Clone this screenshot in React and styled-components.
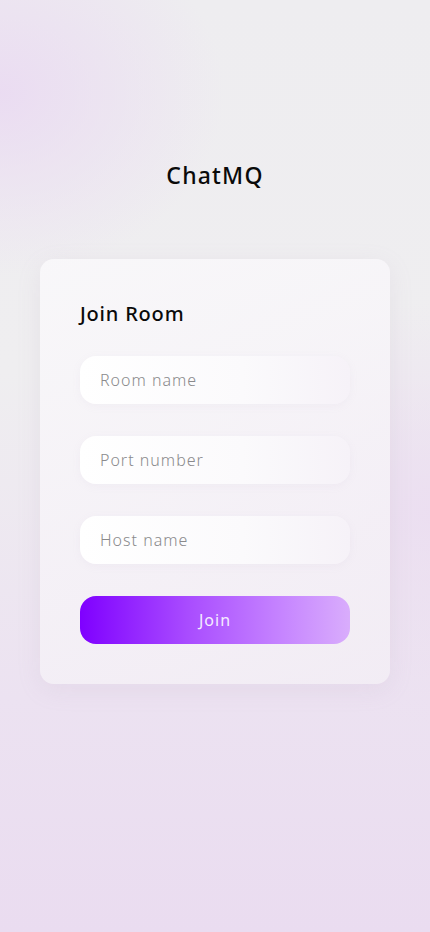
import React from 'react'
import styled, { createGlobalStyle } from 'styled-components'

const GlobalStyle = createGlobalStyle`
  html, body {
    margin: 0;
    padding: 0;
  }
  body {
    font-family: 'Noto Sans', 'Open Sans', sans-serif;
    background: #efedf1;
  }
  * {
    box-sizing: border-box;
  }
`

const fields = ['Room name', 'Port number', 'Host name']

export default () => (
  <>
    <GlobalStyle />
    <Page>
      <Logo>ChatMQ</Logo>
      <Card>
        <Heading>Join Room</Heading>
        <Form onSubmit={e => e.preventDefault()}>
          {fields.map(name => (
            <Input key={name} placeholder={name} />
          ))}
          <Button type="submit">Join</Button>
        </Form>
      </Card>
    </Page>
  </>
)

const Page = styled.div`
  width: 430px;
  height: 932px;
  overflow: hidden;
  display: flex;
  flex-direction: column;
  align-items: center;
  padding-top: 158px;
  background:
    radial-gradient(ellipse 320px 260px at 0% 10%, rgba(234, 218, 242, 0.9), rgba(234, 218, 242, 0) 70%),
    radial-gradient(ellipse 380px 300px at 100% 55%, rgba(235, 220, 241, 0.8), rgba(235, 220, 241, 0) 70%),
    linear-gradient(180deg, #eeedf0 0%, #efeef0 40%, #ece2f1 75%, #eadcf0 100%);
`

const Logo = styled.h1`
  margin: 0;
  font-size: 23px;
  line-height: 34px;
  font-weight: 500;
  letter-spacing: 1.2px;
  color: #0a0a0a;
`

const Card = styled.div`
  margin-top: 67px;
  width: 350px;
  padding: 40px;
  border-radius: 14px;
  background: linear-gradient(160deg, rgba(250, 249, 251, 0.85), rgba(243, 238, 245, 0.85));
  box-shadow: 0 6px 24px rgba(170, 150, 185, 0.12);
`

const Heading = styled.h2`
  margin: 0 0 27px;
  font-size: 20px;
  line-height: 30px;
  font-weight: 500;
  letter-spacing: 0.8px;
  color: #0a0a0a;
`

const Form = styled.form`
  display: flex;
  flex-direction: column;
  gap: 32px;
`

const Input = styled.input`
  height: 48px;
  width: 100%;
  border: none;
  outline: none;
  border-radius: 16px;
  padding: 0 20px;
  font-family: inherit;
  font-size: 16px;
  font-weight: 300;
  letter-spacing: 1px;
  color: #222;
  background: linear-gradient(90deg, #ffffff 0%, #fbfafc 60%, #f6f2f8 100%);
  box-shadow: 0 2px 8px rgba(180, 160, 195, 0.08);

  &::placeholder {
    color: #8a8a8c;
  }
`

const Button = styled.button`
  height: 48px;
  width: 100%;
  border: none;
  border-radius: 16px;
  font-family: inherit;
  font-size: 16px;
  font-weight: 400;
  letter-spacing: 1px;
  color: #f5ecff;
  cursor: pointer;
  background: linear-gradient(90deg, #7f00ff 0%, #a94cff 40%, #c685ff 75%, #d9adfc 100%);
`
